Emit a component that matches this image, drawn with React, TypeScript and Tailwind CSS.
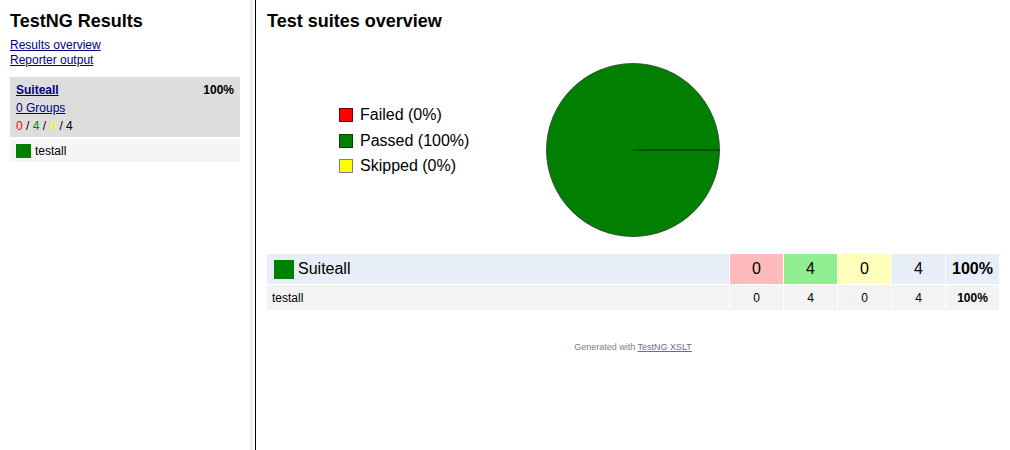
import React from 'react';

const font = { fontFamily: '"Liberation Sans", Arial, sans-serif' };

const Legend = () => {
  const items = [
    { label: 'Failed (0%)', box: 'bg-[#ff0000] border-[#7a0000]' },
    { label: 'Passed (100%)', box: 'bg-[#008000] border-[#004400]' },
    { label: 'Skipped (0%)', box: 'bg-[#ffff00] border-[#808080]' },
  ];
  return (
    <div className="ml-[72px] mt-[44px] flex w-[207px] flex-col gap-[7.5px]">
      {items.map((it) => (
        <div key={it.label} className="flex h-[18px] items-center gap-[7px]">
          <span className={`h-[14px] w-[14px] border ${it.box}`} />
          <span className="text-[16px] leading-[18px] text-black">{it.label}</span>
        </div>
      ))}
    </div>
  );
};

const Pie = () => (
  <svg width="176" height="176" viewBox="0 0 176 176" className="-ml-[1px] block">
    <circle cx="88" cy="88" r="86.5" fill="#007f00" stroke="#2a3a2a" strokeWidth="0.8" />
    <line x1="88" y1="88" x2="174.5" y2="88" stroke="#004400" strokeWidth="1.6" />
  </svg>
);

export default function App() {
  return (
    <div className="flex h-screen w-full bg-white text-black" style={font}>
      {/* left frame */}
      <div className="w-[250px] shrink-0 px-[10px]">
        <h1 className="mt-[11px] text-[18px] font-bold leading-[20px]">TestNG Results</h1>
        <div className="mt-[7px] flex flex-col text-[12px] leading-[15px]">
          <a href="#" className="w-fit text-[#000080] underline">Results overview</a>
          <a href="#" className="w-fit text-[#000080] underline">Reporter output</a>
        </div>
        <div className="mt-[9px] bg-[#dddddd] px-[6px] pb-[2px] pt-[4px] text-[12px] leading-[18px]">
          <div className="flex justify-between">
            <a href="#" className="font-bold text-[#000080] underline">Suiteall</a>
            <span className="font-bold">100%</span>
          </div>
          <a href="#" className="block w-fit text-[#000080] underline">0 Groups</a>
          <div>
            <span className="text-[#ff0000]">0</span> / <span className="text-[#008000]">4</span> /{' '}
            <span className="text-[#ffff00]">0</span> / 4
          </div>
        </div>
        <div className="mt-[3px] flex h-[22px] items-center gap-[4px] bg-[#f5f5f5] px-[6px] text-[12px]">
          <span className="h-[14px] w-[15px] bg-[#008000]" />
          <span>testall</span>
        </div>
      </div>

      {/* frame divider */}
      <div className="w-[3px] shrink-0 bg-[#ebebeb]" />
      <div className="w-[2px] shrink-0 bg-white" />
      <div className="w-[1px] shrink-0 bg-black" />

      {/* main frame */}
      <div className="flex-1 px-[11px]">
        <h1 className="mt-[11px] text-[18px] font-bold leading-[20px]">Test suites overview</h1>
        <div className="mt-[31px] flex items-start">
          <Legend />
          <Pie />
        </div>

        <div className="mt-[16px] grid grid-cols-[1fr_53px_53px_53px_53px_53px] gap-[1px]">
          <div className="flex h-[30px] items-center gap-[4px] bg-[#e8eef7] pl-[7px] text-[16px]">
            <span className="h-[19px] w-[20px] bg-[#008000]" />
            <span>Suiteall</span>
          </div>
          <div className="flex items-center justify-center bg-[#ffbbbb] text-[16px]">0</div>
          <div className="flex items-center justify-center bg-[#90ee90] text-[16px]">4</div>
          <div className="flex items-center justify-center bg-[#ffffbb] text-[16px]">0</div>
          <div className="flex items-center justify-center bg-[#e8eef7] text-[16px]">4</div>
          <div className="flex items-center justify-center bg-[#e8eef7] text-[16px] font-bold">100%</div>

          <div className="flex h-[25px] items-center bg-[#f3f3f3] pl-[5px] text-[12px]">testall</div>
          <div className="flex items-center justify-center bg-[#f3f3f3] text-[12px]">0</div>
          <div className="flex items-center justify-center bg-[#f3f3f3] text-[12px]">4</div>
          <div className="flex items-center justify-center bg-[#f3f3f3] text-[12px]">0</div>
          <div className="flex items-center justify-center bg-[#f3f3f3] text-[12px]">4</div>
          <div className="flex items-center justify-center bg-[#f3f3f3] text-[12px] font-bold">100%</div>
        </div>

        <div className="mt-[31px] text-center text-[9px] leading-[12px] text-[#808080]">
          Generated with{' '}
          <a href="#" className="text-[#6b6b8f] underline">TestNG XSLT</a>
        </div>
      </div>
    </div>
  );
}
